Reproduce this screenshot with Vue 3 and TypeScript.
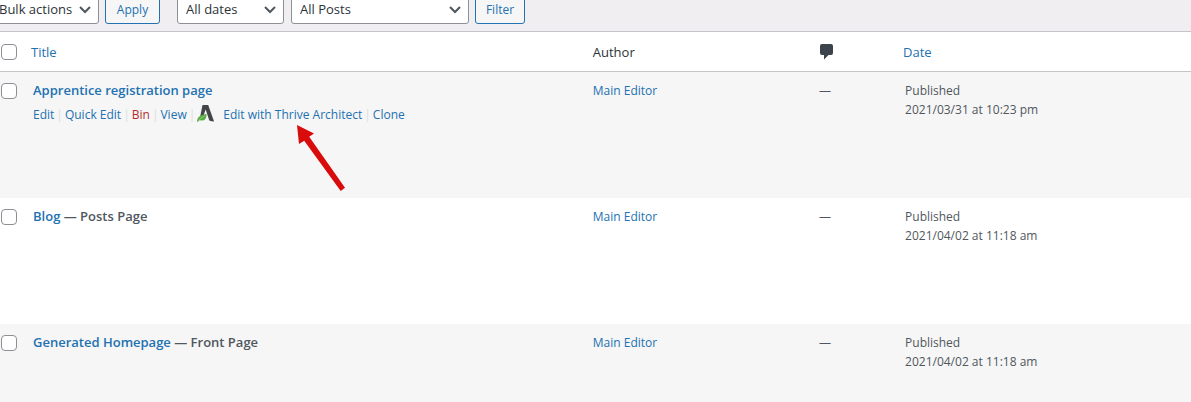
<script setup lang="ts">
import { ref } from 'vue'

interface Post {
  id: number
  title: string
  state?: string
  author: string
  date: string
  actions?: boolean
}

const posts: Post[] = [
  { id: 1, title: 'Apprentice registration page', author: 'Main Editor', date: '2021/03/31 at 10:23 pm', actions: true },
  { id: 2, title: 'Blog', state: 'Posts Page', author: 'Main Editor', date: '2021/04/02 at 11:18 am' },
  { id: 3, title: 'Generated Homepage', state: 'Front Page', author: 'Main Editor', date: '2021/04/02 at 11:18 am' },
]

const selected = ref<number[]>([])

function toggleAll(event: Event) {
  selected.value = (event.target as HTMLInputElement).checked ? posts.map((p) => p.id) : []
}
</script>

<template>
  <main class="page">
    <form class="toolbar" @submit.prevent>
      <span class="picker bulk">
        <select aria-label="Bulk actions">
          <option>Bulk actions</option>
        </select>
        <svg viewBox="0 0 12 8" aria-hidden="true"><path d="M1 1l5 5 5-5" /></svg>
      </span>
      <button type="submit" class="apply">Apply</button>
      <span class="picker dates">
        <select aria-label="Filter by date">
          <option>All dates</option>
        </select>
        <svg viewBox="0 0 12 8" aria-hidden="true"><path d="M1 1l5 5 5-5" /></svg>
      </span>
      <span class="picker kinds">
        <select aria-label="Filter by post type">
          <option>All Posts</option>
        </select>
        <svg viewBox="0 0 12 8" aria-hidden="true"><path d="M1 1l5 5 5-5" /></svg>
      </span>
      <button type="submit" class="filter">Filter</button>
    </form>

    <table>
      <colgroup>
        <col class="c-check" />
        <col class="c-title" />
        <col class="c-author" />
        <col class="c-comments" />
        <col class="c-date" />
      </colgroup>
      <thead>
        <tr>
          <th class="check"><input type="checkbox" aria-label="Select all" @change="toggleAll" /></th>
          <th class="sortable"><a href="#title">Title</a></th>
          <th>Author</th>
          <th>
            <svg class="bubble" viewBox="0 0 15 15" role="img" aria-label="Comments">
              <path d="M3 0h9q2 0 2 2v7q0 2-2 2H9.500L5 15.500V11H3q-2 0-2-2V2q0-2 2-2z" />
            </svg>
          </th>
          <th class="sortable"><a href="#date">Date</a></th>
        </tr>
      </thead>
      <tbody>
        <tr v-for="post in posts" :key="post.id">
          <td class="check">
            <input v-model="selected" type="checkbox" :value="post.id" :aria-label="'Select ' + post.title" />
          </td>
          <td class="primary">
            <strong class="title">
              <a href="#edit">{{ post.title }}</a><template v-if="post.state"> — {{ post.state }}</template>
            </strong>
            <div v-if="post.actions" class="actions">
              <a href="#edit">Edit</a><i>|</i>
              <a href="#quick">Quick Edit</a><i>|</i>
              <a href="#bin" class="bin">Bin</a><i>|</i>
              <a href="#view">View</a><i>|</i>
              <a href="#architect" class="architect">
                <svg viewBox="0 0 17 17" aria-hidden="true">
                  <path class="ink" d="M5.500 0h5.700L16.700 15.500l.3 1-2.500-.2-2.200-.8L8.700 4.500 6.700 10 3.200 11.500z" />
                  <path class="leaf" d="M0 16.700Q.2 12 4 10.500L9.500 8.700Q9.800 15.700 4.500 15.600L2.500 15.200 1 16.700z" />
                  <path class="vein" d="M1.500 15.500Q4 12.700 7.500 11" />
                </svg>
                <span>Edit with Thrive Architect</span>
              </a><i>|</i>
              <a href="#clone">Clone</a>
            </div>
          </td>
          <td><a href="#author">{{ post.author }}</a></td>
          <td>—</td>
          <td>Published<br />{{ post.date }}</td>
        </tr>
      </tbody>
    </table>

    <svg class="pointer" viewBox="0 0 50 68" aria-hidden="true">
      <path d="M1 1L18 9.500 13.200 12.800 49 63.700 44.700 67 8.200 16.700 3 20z" />
    </svg>
  </main>
</template>

<style>
body {
  margin: 0;
}
</style>

<style scoped>
.page {
  position: relative;
  height: 100vh;
  overflow: hidden;
  background: #fff;
  color: #50575e;
  font: 12px/20px "Open Sans", "Noto Sans", sans-serif;
}

a {
  color: #2271b1;
  text-decoration: none;
}

.toolbar {
  display: flex;
  align-items: flex-end;
  height: 24px;
  padding-bottom: 7px;
  background: #f0eef0;
}

.picker {
  position: relative;
  flex: none;
}

.picker svg {
  position: absolute;
  right: 8px;
  top: 12px;
  width: 12px;
  height: 8px;
  fill: none;
  stroke: #50575e;
  stroke-width: 2;
  pointer-events: none;
}

select,
button {
  box-sizing: border-box;
  display: block;
  width: 100%;
  height: 30px;
  margin: 0;
  border: 1px solid #8c8f94;
  border-radius: 3px;
  font: inherit;
}

select {
  appearance: none;
  padding: 0 24px 0 8px;
  background: #fff;
  color: #2c3338;
  font-size: 13px;
}

button {
  flex: none;
  padding: 2px 0 0;
  border-color: #2271b1;
  background: #f6f6f7;
  color: #2271b1;
}

.bulk {
  width: 109px;
  margin-left: -10px;
}

.apply {
  width: 55px;
  margin-left: 6px;
}

.dates {
  width: 107px;
  margin-left: 17px;
}

.kinds {
  width: 178px;
  margin-left: 7px;
}

.filter {
  width: 50px;
  margin-left: 6px;
}

table {
  width: 100%;
  table-layout: fixed;
  border-spacing: 0;
  border-top: 1px solid #c3c4c7;
}

.c-check {
  width: 23px;
}

.c-title {
  width: 47%;
}

.c-author {
  width: 19%;
}

.c-comments {
  width: 86px;
}

th {
  height: 39px;
  padding: 0 10px;
  border-bottom: 1px solid #c3c4c7;
  color: #2c3338;
  font-size: 13px;
  font-weight: 400;
  text-align: left;
}

th.sortable {
  padding-left: 8px;
}

td {
  box-sizing: border-box;
  height: 126px;
  padding: 9px 10px;
  line-height: 19px;
  vertical-align: top;
}

td.primary {
  padding-top: 8px;
  line-height: 20px;
}

tbody tr:nth-child(odd) {
  background: #f6f6f6;
}

.check {
  padding-left: 1px;
  padding-right: 0;
}

td.check {
  padding-top: 11px;
}

input {
  appearance: none;
  display: block;
  box-sizing: border-box;
  width: 16px;
  height: 16px;
  margin: 0;
  border: 1px solid #8c8f94;
  border-radius: 4px;
  background: #fff;
}

input:checked {
  background: #2271b1;
}

.bubble {
  display: block;
  width: 15px;
  height: 15px;
  overflow: visible;
  fill: #3c434a;
}

.title {
  display: block;
  font-size: 13px;
  font-weight: 600;
}

.actions {
  display: flex;
  margin-top: 5px;
  white-space: nowrap;
}

.actions i {
  margin: 0 2px;
  color: #ddd;
  font-style: normal;
}

.actions .bin {
  color: #b32d2e;
}

.architect {
  display: flex;
  gap: 9px;
}

.architect svg {
  width: 17px;
  height: 17px;
}

.ink {
  fill: #434547;
}

.leaf {
  fill: #5cac46;
}

.vein {
  fill: none;
  stroke: #a8d69b;
  stroke-width: 0.600;
}

.pointer {
  position: absolute;
  left: 296px;
  top: 124px;
  width: 50px;
  height: 68px;
  fill: #d90b0b;
  pointer-events: none;
}
</style>
